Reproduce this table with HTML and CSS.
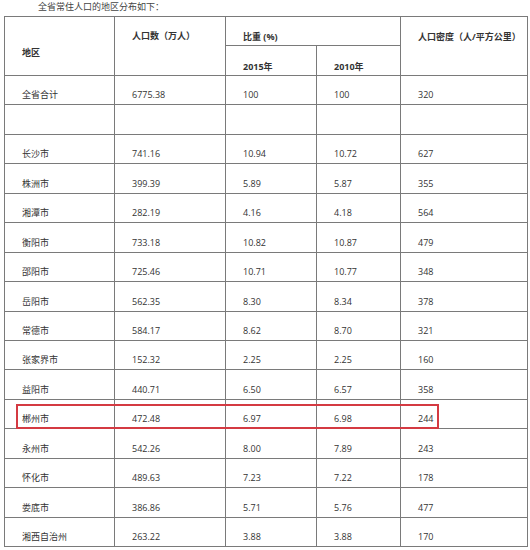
FILE: index.html
```html
<!DOCTYPE html>
<html lang="zh">
<head>
<meta charset="utf-8">
<link rel="stylesheet" href="styles.css">
</head>
<body>
<div class="title">全省常住人口的地区分布如下：</div>
<div class="wrap">
<table class="data">
<colgroup>
<col class="c1"><col class="c2"><col class="c3"><col class="c4"><col class="c5">
</colgroup>
<thead>
<tr class="h1">
<th rowspan="2" class="th-area">地区</th>
<th rowspan="2" class="th-pop">人口数（万人）</th>
<th colspan="2" class="th-share">比重 (%)</th>
<th rowspan="2" class="th-dens">人口密度（人/平方公里）</th>
</tr>
<tr class="h2">
<th class="th-year">2015年</th>
<th class="th-year">2010年</th>
</tr>
</thead>
<tbody>
<tr><td>全省合计</td><td>6775.38</td><td>100</td><td>100</td><td>320</td></tr>
<tr><td></td><td></td><td></td><td></td><td></td></tr>
<tr><td>长沙市</td><td>741.16</td><td>10.94</td><td>10.72</td><td>627</td></tr>
<tr><td>株洲市</td><td>399.39</td><td>5.89</td><td>5.87</td><td>355</td></tr>
<tr><td>湘潭市</td><td>282.19</td><td>4.16</td><td>4.18</td><td>564</td></tr>
<tr><td>衡阳市</td><td>733.18</td><td>10.82</td><td>10.87</td><td>479</td></tr>
<tr><td>邵阳市</td><td>725.46</td><td>10.71</td><td>10.77</td><td>348</td></tr>
<tr><td>岳阳市</td><td>562.35</td><td>8.30</td><td>8.34</td><td>378</td></tr>
<tr><td>常德市</td><td>584.17</td><td>8.62</td><td>8.70</td><td>321</td></tr>
<tr><td>张家界市</td><td>152.32</td><td>2.25</td><td>2.25</td><td>160</td></tr>
<tr><td>益阳市</td><td>440.71</td><td>6.50</td><td>6.57</td><td>358</td></tr>
<tr><td>郴州市</td><td>472.48</td><td>6.97</td><td>6.98</td><td>244</td></tr>
<tr><td>永州市</td><td>542.26</td><td>8.00</td><td>7.89</td><td>243</td></tr>
<tr><td>怀化市</td><td>489.63</td><td>7.23</td><td>7.22</td><td>178</td></tr>
<tr><td>娄底市</td><td>386.86</td><td>5.71</td><td>5.76</td><td>477</td></tr>
<tr><td>湘西自治州</td><td>263.22</td><td>3.88</td><td>3.88</td><td>170</td></tr>
</tbody>
</table>
<div class="highlight"></div>
</div>
</body>
</html>
```

FILE: styles.css
```css
html, body {
  margin: 0;
  padding: 0;
  background: #ffffff;
}
body {
  font-family: "Open Sans", "Noto Sans CJK SC", sans-serif;
  font-size: 9px;
  color: #333333;
  width: 530px;
  height: 550px;
  overflow: hidden;
}
.title {
  padding-left: 38px;
  height: 16px;
  line-height: 14px;
  color: #444444;
}
.wrap {
  position: relative;
  margin-left: 4px;
  width: 523px;
}
.data {
  border-collapse: collapse;
  table-layout: fixed;
  width: 523px;
}
.c1 { width: 110px; }
.c2 { width: 111px; }
.c3 { width: 91px; }
.c4 { width: 84px; }
.c5 { width: 127px; }
.data th, .data td {
  border: 1px solid #7a7a7a;
  padding: 0 0 0 17px;
  text-align: left;
  line-height: 12px;
  white-space: nowrap;
}
.data th {
  font-weight: bold;
  vertical-align: top;
  color: #333333;
}
.data .h1 { height: 29px; }
.data .h2 { height: 30px; }
.data .th-area { padding-top: 30px; }
.data .th-pop { padding-top: 13px; }
.data .th-share { padding-top: 14px; }
.data .th-dens { padding-top: 14px; }
.data .th-year { padding-top: 15px; }
.data td {
  height: 29.44px;
  box-sizing: border-box;
  vertical-align: bottom;
  padding-bottom: 3px;
}
.highlight {
  position: absolute;
  left: 12px;
  top: 388px;
  width: 419px;
  height: 21px;
  border: 2px solid #d43a42;
}
```
